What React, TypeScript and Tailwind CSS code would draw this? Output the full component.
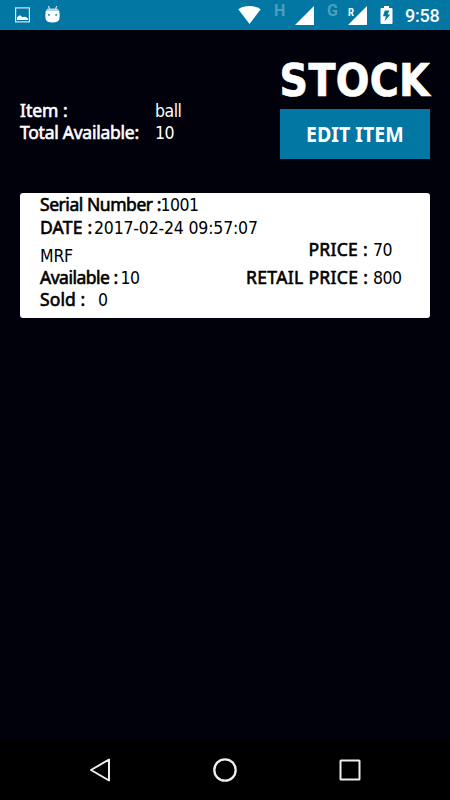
import React from 'react';
import clsx from 'clsx';

interface TextProps {
  children: React.ReactNode;
  className?: string;
}

// Regular weight thickened by a thin stroke, the way Android fakes bold
const Label: React.FC<TextProps> = ({ children, className }) => (
  <span className={clsx("inline-block shrink-0 font-['Noto_Sans',sans-serif] [-webkit-text-stroke:0.6px_currentColor]", className)}>{children}</span>
);

const StatusBar = () => (
  <header className="flex h-[30px] shrink-0 items-center bg-[#0277a3] text-white">
    <svg className="ml-[15px] h-4 w-[15px]" viewBox="0 0 15 16" fill="none">
      <rect x="0.6" y="0.9" width="13.8" height="14" stroke="#d5e8f0" strokeWidth="1.2" />
      <path d="M2 13V10.5L4 8.5H5.5L7.5 10.2L9 9.7L11 10L13 11.5V13Z" fill="white" />
    </svg>
    <svg className="ml-[15px] h-[18px] w-[15px]" viewBox="0 0 15 18">
      <path d="M3.2 -0.8L4.6 3M12 -0.8L10.6 3" stroke="#d5e8f0" strokeWidth="1.1" />
      <path d="M1.2 4.6Q1.4 2.6 3.4 2.5H11.6Q13.6 2.6 13.8 4.6V5.5H1.2Z" fill="#b3d6e4" />
      <path d="M0.6 5H14.4Q15 10 14.2 13.5Q13.3 16.4 7.5 16.4Q1.7 16.4 0.8 13.5Q0 10 0.6 5Z" fill="white" />
      <rect x="3" y="8" width="1.8" height="1.8" fill="#3b94b7" />
      <rect x="10.3" y="8" width="1.8" height="1.8" fill="#3b94b7" />
    </svg>
    <svg className="ml-[178px] h-[18px] w-[23px]" viewBox="0 0 23 18">
      <path d="M0.3 3.2Q5 0 11.5 0Q18 0 22.7 3.2L11.5 18Z" fill="white" />
    </svg>
    <span className="ml-[13px] w-3 self-start pt-[3px] font-['Roboto',sans-serif] text-base leading-4 font-bold tracking-normal text-[#4ba0bf]">H</span>
    <svg className="ml-[9px] h-[19px] w-[19px]" viewBox="0 0 19 19">
      <path d="M19 0V19H0Z" fill="white" />
    </svg>
    <span className="ml-[13px] w-3 self-start pt-[3px] font-['Roboto',sans-serif] text-base leading-4 font-bold tracking-normal text-[#4ba0bf]">G</span>
    <div className="relative ml-[9px] h-[19px] w-[19px]">
      <svg className="h-[19px] w-[19px]" viewBox="0 0 19 19">
        <path d="M19 0V19H0Z" fill="white" />
      </svg>
      <span className="absolute top-px left-0 font-['Roboto',sans-serif] text-[11px] leading-[11px] font-bold"><span className="inline-block origin-left scale-x-[0.85]">R</span></span>
    </div>
    <svg className="ml-[13px] h-[18px] w-[13px]" viewBox="0 0 13 18">
      <path d="M4 0H9V2H11.5Q12.5 2 12.5 3V17Q12.5 18 11.5 18H1.5Q0.5 18 0.5 17V3Q0.5 2 1.5 2H4Z" fill="white" />
      <path d="M9.4 4.5H4.8L3 10.2H5.9L4.6 15.2L10.3 8.4H7.6Z" fill="#0277a3" />
    </svg>
    <span className="ml-[12px] pt-px font-['Roboto',sans-serif] text-[18px] leading-[30px] font-medium tracking-[-0.2px]">9:58</span>
  </header>
);

const NavBar = () => (
  <nav className="flex h-[60px] shrink-0 items-center justify-between bg-black px-[89px]">
    <svg className="h-6 w-[22px]" viewBox="0 0 22 24" fill="none" stroke="#eee" strokeWidth="2" strokeLinejoin="round">
      <path d="M20 1.5V22.5L2 12Z" />
    </svg>
    <svg className="h-6 w-6" viewBox="0 0 24 24" fill="none" stroke="#eee" strokeWidth="2.3">
      <circle cx="12" cy="12" r="10.7" />
    </svg>
    <svg className="h-[22px] w-[22px]" viewBox="0 0 22 22" fill="none" stroke="#eee" strokeWidth="2">
      <rect x="1.5" y="1.5" width="19" height="19" rx="0.5" />
    </svg>
  </nav>
);

const StockCard = () => (
  <section className="mx-5 mt-[34px] flex h-[125px] rounded-[3px] bg-white pl-5 text-black">
    <div className="flex w-[206px] shrink-0 flex-col whitespace-nowrap">
      <p className="flex h-[23px] items-baseline"><Label className="w-[120.5px] tracking-[-0.45px]">Serial Number :</Label>1001</p>
      <p className="flex h-[28px] items-baseline">
        <Label className="w-[54px] tracking-[0.2px]">DATE :</Label>
        <span className="tracking-[-0.18px]">2017-02-24 09:57:07</span>
      </p>
      <p className="h-[22px] pt-px tracking-[-0.2px]">MRF</p>
      <p className="flex h-[22px] items-baseline"><Label className="w-[80.5px] tracking-[-0.5px]">Available :</Label>10</p>
      <p className="flex h-[22px] items-baseline"><Label className="w-[58px] tracking-[0.1px]">Sold :</Label>0</p>
    </div>
    <div className="w-[184px] pt-[45px] whitespace-nowrap">
      <p className="flex h-[28px] items-baseline">
        <Label className="w-[122px] text-right tracking-[0.3px]">PRICE :</Label>
        <span className="ml-[5px]">70</span>
      </p>
      <p className="flex h-[22px] items-baseline">
        <Label className="w-[122px] text-right tracking-[0.35px]">RETAIL PRICE :</Label>
        <span className="ml-[5px]">800</span>
      </p>
    </div>
  </section>
);

export default function App() {
  return (
    <div className="flex h-[800px] w-[450px] flex-col overflow-hidden bg-[#01010b] font-['DejaVu_Sans_Condensed','DejaVu_Sans',sans-serif] text-[17.5px] leading-[22px] tracking-[-0.5px] text-white">
      <StatusBar />
      <main className="flex-1">
        <div className="flex h-[129px] justify-between px-5 pt-[23px]">
          <div className="pt-[46px] whitespace-nowrap">
            <p className="flex h-[22px] items-baseline"><Label className="w-[135px] tracking-normal">Item :</Label>ball</p>
            <p className="flex h-[22px] items-baseline"><Label className="w-[135px] tracking-[-0.25px]">Total Available:</Label>10</p>
          </div>
          <div className="flex w-[150px] flex-col items-end">
            <h1 className="h-[56px] text-[44px] leading-[56px] font-bold tracking-[0.3px] [-webkit-text-stroke:0.7px_currentColor]">STOCK</h1>
            <button className="h-[50px] w-[150px] bg-[#0277a3] pb-0.5 font-['Noto_Sans',sans-serif] text-[22px] font-bold tracking-normal whitespace-nowrap">
              <span className="inline-block scale-x-[0.89]">EDIT ITEM</span>
            </button>
          </div>
        </div>
        <StockCard />
      </main>
      <NavBar />
    </div>
  );
}
